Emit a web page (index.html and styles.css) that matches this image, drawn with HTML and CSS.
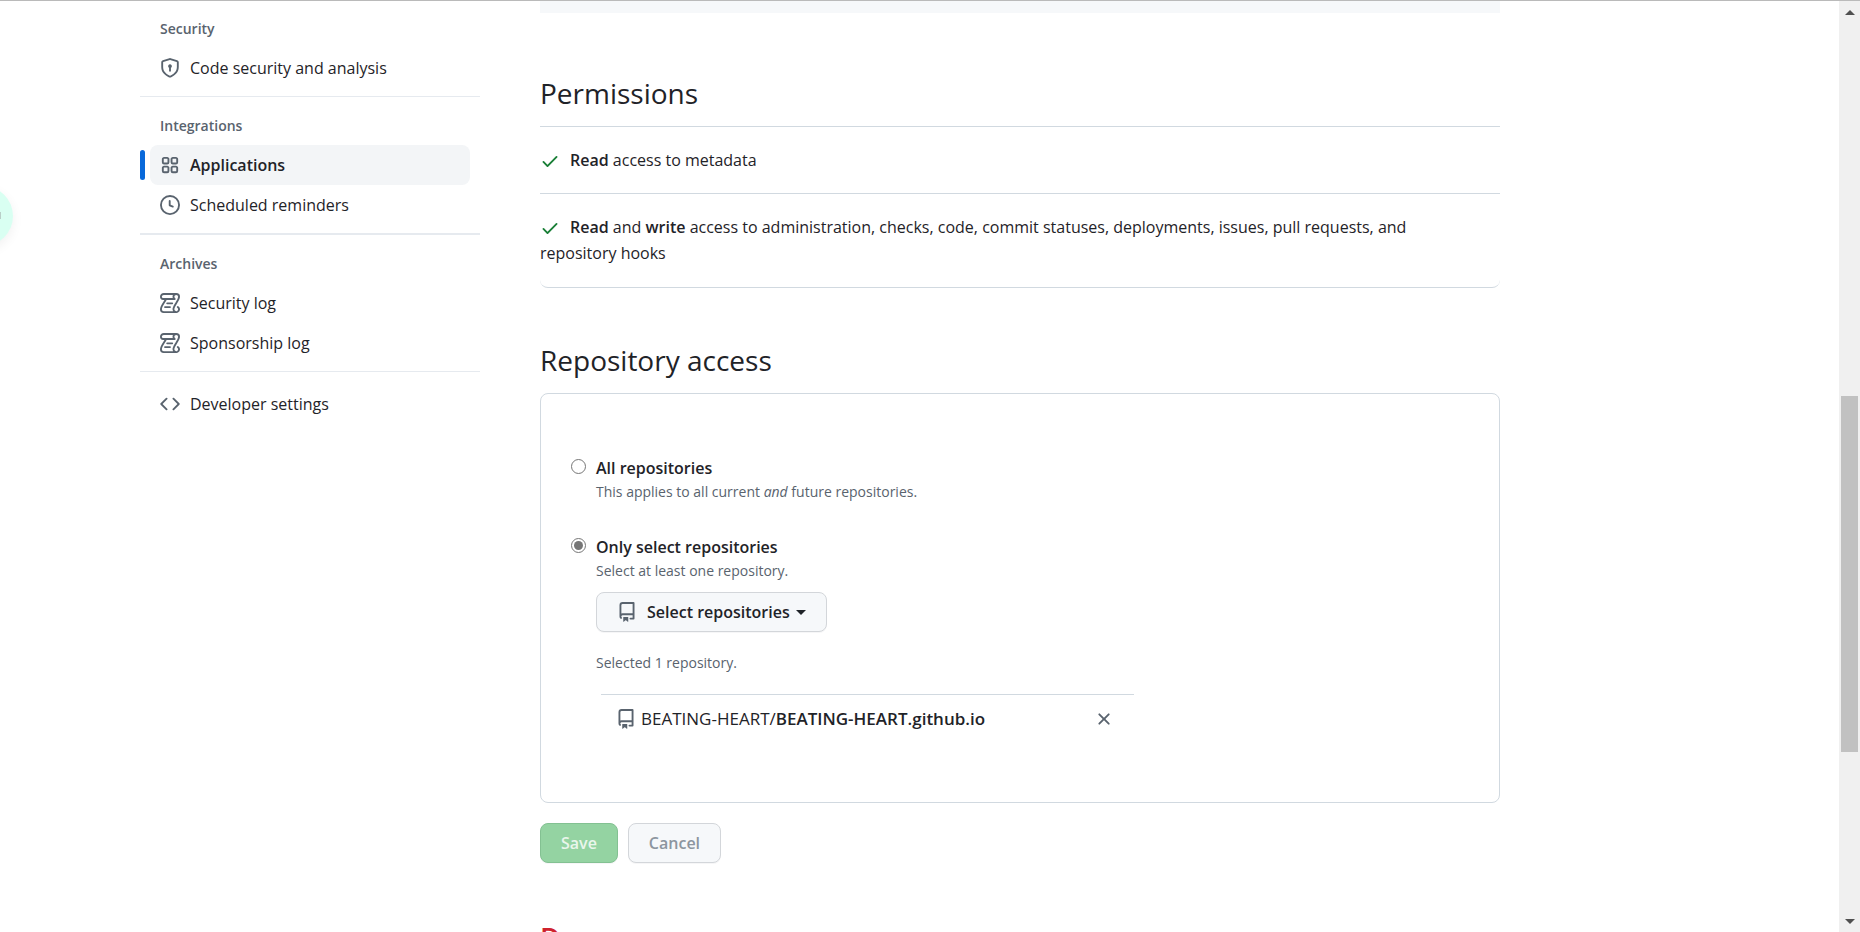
FILE: index.html
```html
<!DOCTYPE html>
<html lang="en">
<head>
<meta charset="utf-8">
<title>Applications</title>
<link rel="stylesheet" href="styles.css">
</head>
<body>
<svg class="sprite" aria-hidden="true">
  <symbol id="i-shield" viewBox="0 0 16 16"><path d="m8.533.133 5.25 1.68A1.75 1.75 0 0 1 15 3.48V7c0 1.566-.32 3.182-1.303 4.682-.983 1.498-2.585 2.813-5.032 3.855a1.697 1.697 0 0 1-1.33 0c-2.447-1.042-4.049-2.357-5.032-3.855C1.32 10.182 1 8.566 1 7V3.48a1.755 1.755 0 0 1 1.217-1.667l5.25-1.68a1.748 1.748 0 0 1 1.066 0Zm-.61 1.429.001.001-5.25 1.68a.251.251 0 0 0-.174.237V7c0 1.36.275 2.666 1.057 3.859.784 1.194 2.121 2.342 4.366 3.298a.196.196 0 0 0 .154 0c2.245-.957 3.582-2.103 4.366-3.297C13.225 9.666 13.5 8.358 13.5 7V3.48a.25.25 0 0 0-.174-.238l-5.25-1.68a.25.25 0 0 0-.153 0ZM9.5 6.5c0 .536-.286 1.032-.75 1.3v2.45a.75.75 0 0 1-1.5 0V7.8A1.5 1.5 0 1 1 9.5 6.5Z"/></symbol>
  <symbol id="i-apps" viewBox="0 0 16 16"><path d="M1.5 3.25c0-.966.784-1.75 1.75-1.75h2.5c.966 0 1.75.784 1.75 1.75v2.5A1.75 1.75 0 0 1 5.75 7.5h-2.5A1.75 1.75 0 0 1 1.5 5.75Zm7 0c0-.966.784-1.75 1.75-1.75h2.5c.966 0 1.75.784 1.75 1.75v2.5a1.75 1.75 0 0 1-1.75 1.75h-2.5A1.75 1.75 0 0 1 8.5 5.75Zm-7 7c0-.966.784-1.75 1.75-1.75h2.5c.966 0 1.75.784 1.75 1.75v2.5a1.75 1.75 0 0 1-1.75 1.75h-2.5a1.75 1.75 0 0 1-1.75-1.75Zm7 0c0-.966.784-1.75 1.75-1.75h2.5c.966 0 1.75.784 1.75 1.75v2.5a1.75 1.75 0 0 1-1.75 1.75h-2.5a1.75 1.75 0 0 1-1.75-1.75ZM3.25 3a.25.25 0 0 0-.25.25v2.5c0 .138.112.25.25.25h2.5A.25.25 0 0 0 6 5.75v-2.5A.25.25 0 0 0 5.75 3Zm7 0a.25.25 0 0 0-.25.25v2.5c0 .138.112.25.25.25h2.5a.25.25 0 0 0 .25-.25v-2.5a.25.25 0 0 0-.25-.25Zm-7 7a.25.25 0 0 0-.25.25v2.5c0 .138.112.25.25.25h2.5a.25.25 0 0 0 .25-.25v-2.5a.25.25 0 0 0-.25-.25Zm7 0a.25.25 0 0 0-.25.25v2.5c0 .138.112.25.25.25h2.5a.25.25 0 0 0 .25-.25v-2.5a.25.25 0 0 0-.25-.25Z"/></symbol>
  <symbol id="i-clock" viewBox="0 0 16 16"><path d="M8 0a8 8 0 1 1 0 16A8 8 0 0 1 8 0ZM1.5 8a6.5 6.5 0 1 0 13 0 6.5 6.5 0 0 0-13 0Zm7-3.25v2.992l2.028.812a.75.75 0 0 1-.557 1.392l-2.5-1A.751.751 0 0 1 7 8.25v-3.5a.75.75 0 0 1 1.5 0Z"/></symbol>
  <symbol id="i-log" viewBox="0 0 16 16"><path fill="none" stroke="#59636e" stroke-width="1.5" stroke-linecap="round" stroke-linejoin="round" d="M11.750 4.750H2.500C1.500 4.750.750 4.100.750 3A2.250 2.250 0 0 1 3 .750h10A2.250 2.250 0 0 1 15.250 3c0 3.200-4.500 6.700-4.500 10a2.250 2.250 0 1 0 3.500-1.870M13 .750A2.250 2.250 0 0 0 10.750 3c0 .8.400 1.350 1 1.750M4.900 4.750C3.600 7.600.750 10.200.750 13A2.250 2.250 0 0 0 3 15.250h10M5.750 8.250h4M4 11.250h4"/></symbol>
  <symbol id="i-code" viewBox="0 0 16 16"><path d="m11.28 3.22 4.25 4.25a.75.75 0 0 1 0 1.06l-4.25 4.25a.749.749 0 0 1-1.275-.326.749.749 0 0 1 .215-.734L13.94 8l-3.72-3.72a.749.749 0 0 1 .326-1.275.749.749 0 0 1 .734.215Zm-6.56 0a.751.751 0 0 1 1.042.018.751.751 0 0 1 .018 1.042L2.06 8l3.72 3.72a.749.749 0 0 1-.326 1.275.749.749 0 0 1-.734-.215L.47 8.53a.75.75 0 0 1 0-1.06Z"/></symbol>
  <symbol id="i-check" viewBox="0 0 16 16"><path d="M13.78 4.22a.75.75 0 0 1 0 1.06l-7.25 7.25a.75.75 0 0 1-1.06 0L2.22 9.28a.751.751 0 0 1 .018-1.042.751.751 0 0 1 1.042-.018L6 10.94l6.72-6.72a.75.75 0 0 1 1.06 0Z"/></symbol>
  <symbol id="i-repo" viewBox="0 0 16 16"><path d="M2 2.5A2.5 2.5 0 0 1 4.5 0h8.75a.75.75 0 0 1 .75.75v12.5a.75.75 0 0 1-.75.75h-2.5a.75.75 0 0 1 0-1.5h1.75v-2h-8a1 1 0 0 0-.714 1.7.75.75 0 1 1-1.072 1.05A2.495 2.495 0 0 1 2 11.5Zm10.5-1h-8a1 1 0 0 0-1 1v6.708A2.486 2.486 0 0 1 4.5 9h8ZM5 12.25a.25.25 0 0 1 .25-.25h3.5a.25.25 0 0 1 .25.25v3.25a.25.25 0 0 1-.4.2l-1.45-1.087a.249.249 0 0 0-.3 0L5.4 15.7a.25.25 0 0 1-.4-.2Z"/></symbol>
  <symbol id="i-x" viewBox="0 0 16 16"><path d="M3.72 3.72a.75.75 0 0 1 1.06 0L8 6.94l3.22-3.22a.749.749 0 0 1 1.275.326.749.749 0 0 1-.215.734L9.06 8l3.22 3.22a.749.749 0 0 1-.326 1.275.749.749 0 0 1-.734-.215L8 9.06l-3.22 3.22a.751.751 0 0 1-1.042-.018.751.751 0 0 1-.018-1.042L6.94 8 3.72 4.78a.75.75 0 0 1 0-1.06Z"/></symbol>
</svg>
<div class="viewport">
  <div class="page">
    <div class="container">
      <nav class="sidebar" aria-label="Settings">
        <section class="group">
          <h3 class="group-title">Security</h3>
          <a class="nav-item" href="#"><svg class="icon"><use href="#i-shield"/></svg>Code security and analysis</a>
        </section>
        <section class="group">
          <h3 class="group-title">Integrations</h3>
          <a class="nav-item current" href="#" aria-current="page"><svg class="icon"><use href="#i-apps"/></svg>Applications</a>
          <a class="nav-item" href="#"><svg class="icon"><use href="#i-clock"/></svg>Scheduled reminders</a>
        </section>
        <section class="group strong-rule">
          <h3 class="group-title">Archives</h3>
          <a class="nav-item" href="#"><svg class="icon"><use href="#i-log"/></svg>Security log</a>
          <a class="nav-item" href="#"><svg class="icon"><use href="#i-log"/></svg>Sponsorship log</a>
        </section>
        <section class="group">
          <a class="nav-item" href="#"><svg class="icon"><use href="#i-code"/></svg>Developer settings</a>
        </section>
      </nav>
      <main class="main">
        <div class="panel-end"></div>
        <h2 class="heading">Permissions</h2>
        <ul class="permissions">
          <li class="permission"><svg class="icon check"><use href="#i-check"/></svg><strong>Read</strong> access to metadata</li>
          <li class="permission"><svg class="icon check"><use href="#i-check"/></svg><strong>Read</strong> and <strong>write</strong> access to administration, checks, code, commit statuses, deployments, issues, pull requests, and repository hooks</li>
        </ul>
        <h2 class="heading">Repository access</h2>
        <form>
          <div class="card">
            <div class="option">
              <input class="radio" type="radio" name="access" id="all">
              <div class="option-body">
                <label class="option-label" for="all">All repositories</label>
                <p class="note">This applies to all current <em>and</em> future repositories.</p>
              </div>
            </div>
            <div class="option">
              <input class="radio" type="radio" name="access" id="selected" checked>
              <div class="option-body">
                <label class="option-label" for="selected">Only select repositories</label>
                <p class="note">Select at least one repository.</p>
                <button class="btn picker" type="button"><svg class="icon"><use href="#i-repo"/></svg><span class="picker-text">Select repositories</span><span class="caret"></span></button>
                <p class="note">Selected 1 repository.</p>
                <div class="repo">
                  <svg class="icon"><use href="#i-repo"/></svg>
                  <span class="repo-name">BEATING-HEART/<strong>BEATING-HEART.github.io</strong></span>
                  <button class="remove" type="button" aria-label="Remove repository"><svg class="icon"><use href="#i-x"/></svg></button>
                </div>
              </div>
            </div>
          </div>
          <div class="actions">
            <button class="btn save" type="submit" disabled>Save</button>
            <button class="btn cancel" type="button" disabled>Cancel</button>
          </div>
        </form>
        <h2 class="heading danger">Danger zone</h2>
      </main>
    </div>
  </div>
  <div class="scrollbar" aria-hidden="true">
    <span class="arrow up"></span>
    <span class="track"><span class="thumb"></span></span>
    <span class="arrow down"></span>
  </div>
</div>
<div class="bubble"></div>
</body>
</html>
```
FILE: styles.css
```css
* { box-sizing: border-box; }
body {
  margin: 0;
  color: #1f2328;
  background: #fff;
  font: 16px/26px "Open Sans", "Noto Sans", sans-serif;
}
h2, h3, p, ul { margin: 0; padding: 0; }
strong { font-weight: 600; }
.sprite { display: none; }
.icon { width: 20px; height: 20px; flex: none; fill: #59636e; }

.viewport {
  display: flex;
  height: 100vh;
  overflow: hidden;
  border-top: 1px solid #bababa;
}
.page { flex: 1; min-width: 0; }
.container {
  display: grid;
  grid-template-columns: 340px minmax(0, 960px);
  gap: 60px;
  max-width: 1599px;
  margin: 0 auto;
  padding: 0 20px;
}

/* Sidebar */
.group + .group {
  margin-top: 8px;
  padding-top: 12px;
  border-top: 1px solid #e6eaef;
}
.group + .strong-rule { border-top-width: 2px; }
.group-title {
  height: 36px;
  padding: 7px 20px 0;
  color: #59636e;
  font-size: 14px;
  font-weight: 600;
  line-height: 20px;
}
.group:first-child .group-title { margin-top: 11px; }
.nav-item {
  position: relative;
  display: flex;
  align-items: center;
  gap: 10px;
  height: 40px;
  margin: 0 10px;
  padding: 0 10px;
  border-radius: 8px;
  color: inherit;
  text-decoration: none;
}
.current { background: #f3f5f7; font-weight: 600; }
.current::before {
  content: "";
  position: absolute;
  left: -10px;
  top: 5px;
  width: 5px;
  height: 30px;
  border-radius: 3px;
  background: #0969da;
}

/* Main column */
.panel-end { height: 12px; margin-bottom: 58px; background: #f6f8fa; }
.heading {
  margin-bottom: 10px;
  font-size: 28px;
  font-weight: 400;
  line-height: 45px;
}
.permissions {
  margin-bottom: 50px;
  list-style: none;
}
.permission {
  padding: 20px 20px 20px 0;
  border-top: 1px solid #d1d9e0;
}
.permission:last-child {
  padding-bottom: 21px;
  border-bottom: 1px solid #d1d9e0;
  border-radius: 0 0 8px 8px;
}
.check { margin-right: 10px; fill: #1a7f37; vertical-align: -5px; }

.card {
  display: grid;
  gap: 31px;
  padding: 61px 30px 59px;
  border: 1px solid #d1d9e0;
  border-radius: 8px;
}
.option { display: flex; gap: 10px; }
.radio {
  appearance: none;
  width: 15px;
  height: 15px;
  margin: 4px 0 0;
  border: 1px solid #767676;
  border-radius: 50%;
  flex: none;
}
.radio:checked { background: #767676; background-clip: content-box; padding: 2px; }
.option-body { flex: 1; min-width: 0; }
.option-label { display: block; font-weight: 600; }
.note { color: #59636e; font-size: 14px; line-height: 22px; }
.btn {
  height: 40px;
  padding: 0 20px;
  border: 1px solid #d3d6da;
  border-radius: 8px;
  background: #f6f8fa;
  box-shadow: 0 1px 0 #1f23280a;
  color: inherit;
  font: inherit;
  font-weight: 600;
}
.picker { display: flex; align-items: center; margin: 10px 0 20px; }
.picker-text { margin: 0 6px 0 10px; }
.caret { border: 5px solid transparent; border-top-color: currentColor; border-bottom: 0; }
.repo {
  display: flex;
  align-items: center;
  gap: 5px;
  max-width: 533px;
  height: 49px;
  margin: 20px 0 0 5px;
  padding: 0 20px 0 15px;
  border-top: 1px solid #d1d9e0;
}
.repo-name { flex: 1; font-size: 17px; }
.remove { display: flex; padding: 0; border: 0; background: none; }
.actions { display: flex; gap: 10px; margin: 20px 0 53px; }
.save { border-color: #83c192; background: #94d3a2; color: #eaf6ec; }
.cancel { color: #8c959f; }
.danger { color: #cf222e; font-weight: 600; }

/* Scrollbar */
.scrollbar {
  display: flex;
  flex-direction: column;
  align-items: center;
  width: 21px;
  padding: 9px 0 8px;
  background: #f0f0f0;
}
.arrow { border: 5px solid transparent; }
.up { border-top: 0; border-bottom-color: #505050; }
.down { border-bottom: 0; border-top-color: #505050; }
.track { display: flex; flex-direction: column; flex: 1; width: 17px; padding-top: 381px; }
.thumb { height: 356px; background: #c1c1c1; }

/* Assistant bubble tucked behind the left edge */
.bubble {
  position: fixed;
  left: -47px;
  top: 186px;
  width: 60px;
  height: 60px;
  border-radius: 50%;
  background: #d9fff2;
  box-shadow: 0 4px 12px #0000000f;
}
.bubble::after {
  content: "";
  position: absolute;
  left: 44px;
  top: 26px;
  width: 4px;
  height: 7px;
  background: #b9cfc8;
}
```
